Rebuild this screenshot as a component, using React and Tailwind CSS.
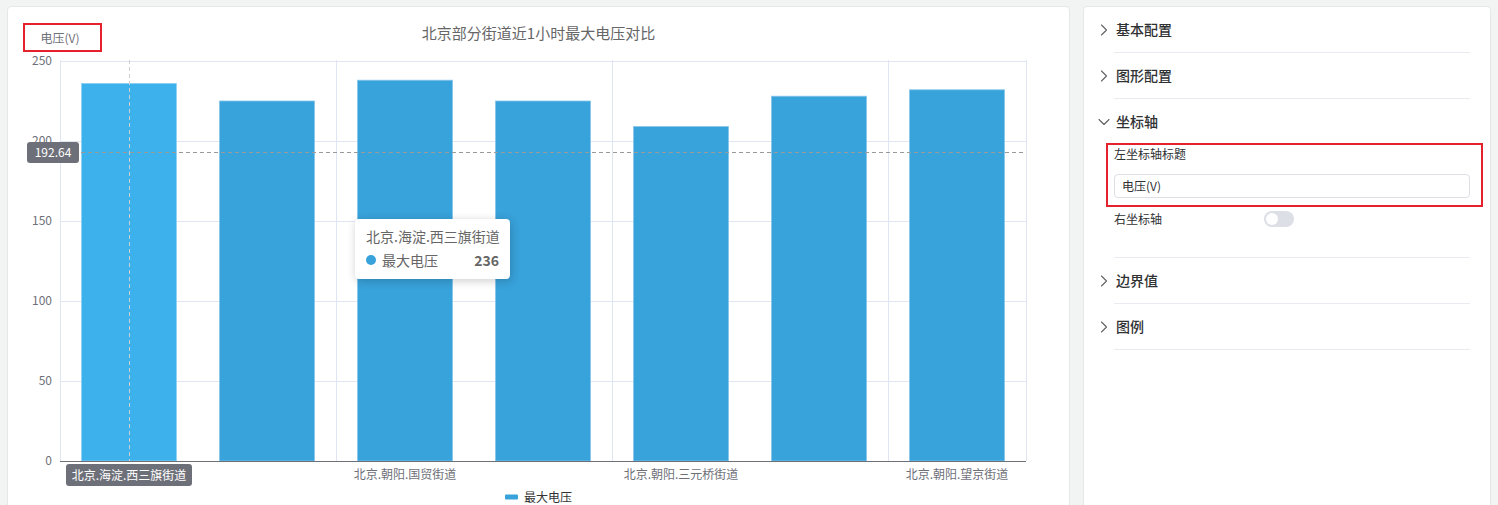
import React from 'react';
import { ChevronRight, ChevronDown } from 'lucide-react';

const FONT = '"Noto Sans CJK SC", "Noto Sans", sans-serif';

// chart geometry (page coordinates)
const PLOT = { left: 60, right: 1026, top: 60, bottom: 461 };
const CAT_W = (PLOT.right - PLOT.left) / 7;
const SCALE = 400 / 250;

const data = [
  { name: '北京.海淀.西三旗街道', value: 236 },
  { name: '北京.海淀.上地街道', value: 225 },
  { name: '北京.朝阳.国贸街道', value: 238 },
  { name: '北京.朝阳.望京街道', value: 225 },
  { name: '北京.朝阳.三元桥街道', value: 209 },
  { name: '北京.朝阳.酒仙桥街道', value: 228 },
  { name: '北京.朝阳.望京街道', value: 232 },
];

const Chart = () => {
  const yTicks = [0, 50, 100, 150, 200, 250];
  const y = (v) => PLOT.bottom - v * SCALE;
  const cx = (i) => PLOT.left + CAT_W * (i + 0.5);

  return (
    <svg width="1061" height="498" viewBox="8 7 1061 498" className="block" style={{ fontFamily: FONT }}>
      {/* title */}
      <text x="538.5" y="32" textAnchor="middle" dominantBaseline="central" fontSize="15" fill="#666">
        北京部分街道近1小时最大电压对比
      </text>

      {/* y axis name + highlight box */}
      <text x="60" y="37" textAnchor="middle" dominantBaseline="central" fontSize="12" fill="#6e7079">电压(V)</text>
      <rect x="24" y="24" width="77" height="27" fill="none" stroke="#e5222c" strokeWidth="2" />

      {/* grid */}
      {yTicks.map((t) => (
        <g key={t}>
          {t > 0 && <line x1={PLOT.left} x2={PLOT.right} y1={y(t) + 0.5} y2={y(t) + 0.5} stroke="#e0e6f1" />}
          <text x="52" y={y(t) - 2} textAnchor="end" dominantBaseline="central" fontSize="12" fill="#6e7079">{t}</text>
        </g>
      ))}
      {[0, 2, 4, 6, 7].map((k) => (
        <line key={k} x1={PLOT.left + CAT_W * k + 0.5} x2={PLOT.left + CAT_W * k + 0.5} y1={PLOT.top} y2={PLOT.bottom} stroke="#e0e6f1" />
      ))}

      {/* bars */}
      {data.map((d, i) => (
        <rect
          key={i}
          x={cx(i) - 47.5}
          y={y(d.value)}
          width="95"
          height={d.value * SCALE}
          fill={i === 0 ? '#3cb1ec' : '#38a2da'}
          stroke={i === 0 ? '#8fd0f3' : '#86c5ea'}
          strokeWidth="0.8"
        />
      ))}

      {/* axis line */}
      <line x1={PLOT.left} x2={PLOT.right} y1={PLOT.bottom + 0.5} y2={PLOT.bottom + 0.5} stroke="#6e7079" />

      {/* crosshair */}
      <line x1="129.5" x2="129.5" y1={PLOT.top} y2={PLOT.bottom} stroke="#cfcfcf" strokeDasharray="4 3" />
      <line x1={PLOT.left} x2={PLOT.right} y1="152.5" y2="152.5" stroke="#9a9a9a" strokeDasharray="4 3" />
      <rect x="27" y="142" width="52" height="21" rx="3" fill="#6e7079" />
      <text x="53" y="151.5" textAnchor="middle" dominantBaseline="central" fontSize="12" fill="#fff">192.64</text>

      {/* x labels */}
      <rect x="66" y="464" width="126" height="22" rx="3" fill="#6e7079" />
      <text x="129" y="474" textAnchor="middle" dominantBaseline="central" fontSize="12" fill="#fff">北京.海淀.西三旗街道</text>
      <text x={cx(2)} y="473" textAnchor="middle" dominantBaseline="central" fontSize="12" fill="#6e7079">北京.朝阳.国贸街道</text>
      <text x={cx(4)} y="473" textAnchor="middle" dominantBaseline="central" fontSize="12" fill="#6e7079">北京.朝阳.三元桥街道</text>
      <text x={cx(6)} y="473" textAnchor="middle" dominantBaseline="central" fontSize="12" fill="#6e7079">北京.朝阳.望京街道</text>

      {/* legend */}
      <rect x="505" y="494.5" width="13" height="5" rx="1" fill="#38a2da" />
      <text x="524" y="496" dominantBaseline="central" fontSize="12" fill="#333">最大电压</text>
    </svg>
  );
};

const Section = ({ title, open, children }) => (
  <div className="flex pl-[10px] pr-[20px]">
    <div className="w-[20px] h-[45px] flex items-center shrink-0">
      {open ? (
        <ChevronDown size={20} strokeWidth={1.3} className="text-[#606266]" />
      ) : (
        <ChevronRight size={20} strokeWidth={1.3} className="text-[#606266]" />
      )}
    </div>
    <div className="flex-1 border-b border-[#e9ebf1]">
      <div className="h-[45px] flex items-center pl-[2px] text-[14px] font-medium text-[#303133]">{title}</div>
      {children}
    </div>
  </div>
);

export default function App() {
  return (
    <div className="h-[505px] overflow-hidden bg-[#f2f3f3] flex gap-[13px] px-[7px] pt-[6px]" style={{ fontFamily: FONT }}>
      <div className="relative w-[1063px] h-[520px] shrink-0 bg-white border border-[#e6e7e8] rounded-[4px]">
        <Chart />
        {/* tooltip */}
        <div className="absolute left-[347px] top-[212px] w-[155px] h-[60px] bg-white rounded-[4px] shadow-[1px_2px_10px_rgba(0,0,0,0.2)] px-[11px] pt-[7px]">
          <div className="text-[14px] leading-[20px] text-[#666] whitespace-nowrap">北京.海淀.西三旗街道</div>
          <div className="flex items-center mt-[4px] text-[14px] leading-[20px] text-[#666]">
            <span className="w-[10px] h-[10px] rounded-full bg-[#38a2da] mr-[6px]" />
            <span>最大电压</span>
            <span className="ml-auto font-bold">236</span>
          </div>
        </div>
      </div>

      <div className="flex-1 h-[520px] bg-white border border-[#e6e7e8] rounded-[4px]">
        <Section title="基本配置" />
        <Section title="图形配置" />
        <Section title="坐标轴" open>
          <div className="-mt-[1px] -ml-[8px] -mr-[13px] border-2 border-[#e5222c] pl-[6px] pr-[11px] pb-[7px]">
            <div className="text-[12px] leading-[16px] pt-[1px] text-[#303133]">左坐标轴标题</div>
            <div className="mt-[12px] h-[24px] border border-[#dcdfe6] rounded-[4px] flex items-center pl-[7px] text-[12px] text-[#303133]">
              电压(V)
            </div>
          </div>
          <div className="flex items-center h-[20px] mt-[2px] mb-[28px]">
            <span className="w-[150px] text-[12px] text-[#303133]">右坐标轴</span>
            <span className="relative w-[30px] h-[16px] rounded-full bg-[#dcdfe6]">
              <span className="absolute left-[2px] top-[2px] w-[12px] h-[12px] rounded-full bg-white" />
            </span>
          </div>
        </Section>
        <Section title="边界值" />
        <Section title="图例" />
      </div>
    </div>
  );
}
